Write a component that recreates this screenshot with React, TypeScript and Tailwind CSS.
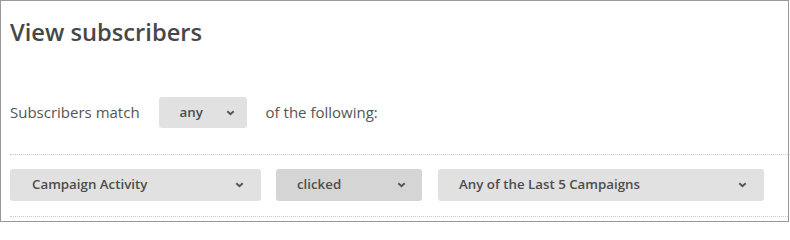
const Chevron = () => (
  <svg width="9" height="6" viewBox="0 0 9 6" className="shrink-0">
    <path d="M1.3 1.2 L4.5 4.3 L7.7 1.2" fill="none" stroke="#555" strokeWidth="1.9" />
  </svg>
);

type SelectProps = {
  label: string;
  className: string;
};

const Select = ({ label, className }: SelectProps) => (
  <div
    className={`flex items-center justify-between rounded-[3px] text-[13.3px] text-[#4d4d4d] font-semibold ${className}`}
  >
    <span>{label}</span>
    <Chevron />
  </div>
);

export default function App() {
  return (
    <div className="w-[789px] h-[222px] border border-[#9a9a9a] bg-white overflow-hidden font-['Open_Sans',sans-serif]">
      <h1 className="pl-[9px] pt-[14px] text-[23.7px] leading-[34px] font-semibold text-[#474747]">
        View subscribers
      </h1>

      <div className="flex items-center mt-[48px] pl-[9px] text-[15px] text-[#555]">
        <span>Subscribers match</span>
        <Select
          label="any"
          className="ml-[19px] w-[88px] h-[31px] pl-[21px] pr-[12px] bg-[#e1e1e1]"
        />
        <span className="ml-[19px]">of the following:</span>
      </div>

      <div className="mt-[26px] ml-[9px] border-t border-dotted border-[#c8c8c8]" />

      <div className="flex items-center mt-[14px] pl-[9px]">
        <Select
          label="Campaign Activity"
          className="w-[251px] h-[32px] pl-[22px] pr-[17px] bg-[#e1e1e1]"
        />
        <Select
          label="clicked"
          className="ml-[15px] w-[146px] h-[32px] pl-[21px] pr-[16px] bg-[#d5d5d5]"
        />
        <Select
          label="Any of the Last 5 Campaigns"
          className="ml-[16px] w-[326px] h-[32px] pl-[21px] pr-[17px] bg-[#e1e1e1]"
        />
      </div>

      <div className="mt-[15px] ml-[9px] border-t border-dotted border-[#c8c8c8]" />
    </div>
  );
}
